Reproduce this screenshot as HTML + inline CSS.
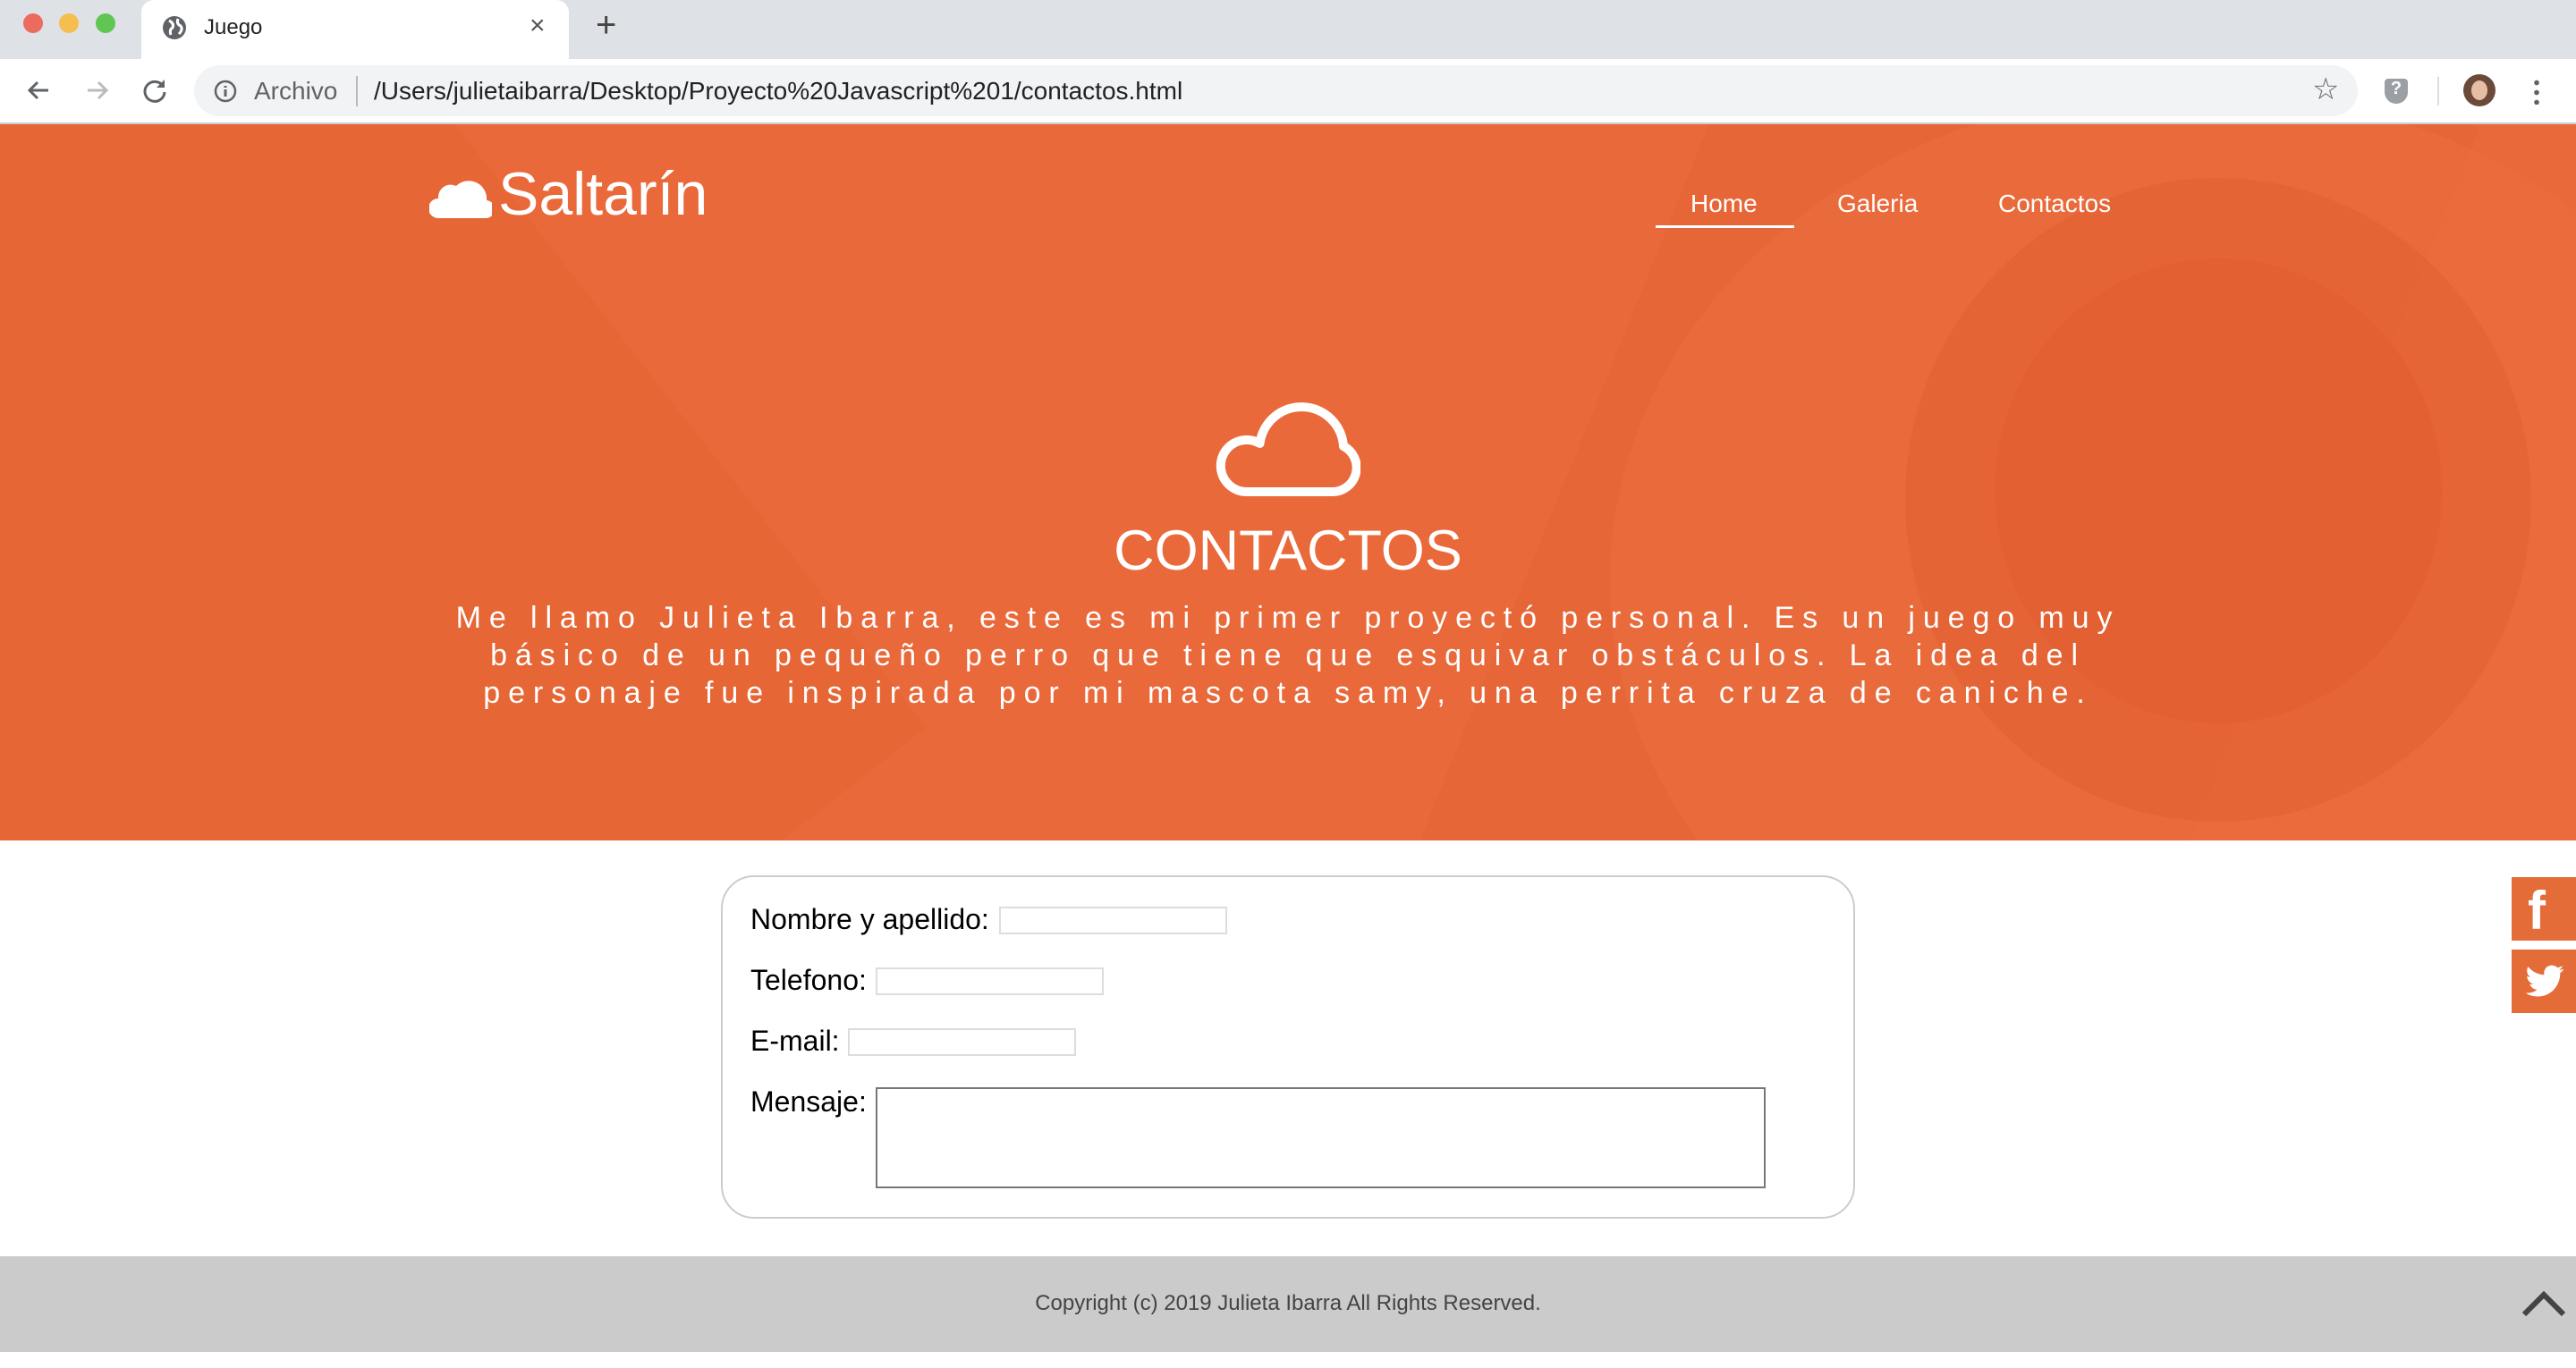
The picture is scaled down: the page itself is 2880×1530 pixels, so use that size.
<!DOCTYPE html>
<html><head><meta charset="utf-8"><style>
*{margin:0;padding:0;box-sizing:border-box}
body{width:2880px;height:1530px;overflow:hidden;background:#fff;font-family:"Liberation Sans",Arial,sans-serif;position:relative}
.abs{position:absolute}
.tabbar{left:0;top:0;width:2880px;height:66px;background:#dee1e6}
.dot{width:22px;height:22px;border-radius:50%;top:15px}
.tab{left:158px;top:0;width:478px;height:68px;background:#fff;border-radius:14px 14px 0 0}
.toolbar{left:0;top:66px;width:2880px;height:73px;background:#fff;border-bottom:2px solid #ccc}
.omni{left:217px;top:73px;width:2419px;height:57px;background:#f1f3f4;border-radius:29px}
.hero{left:0;top:139px;width:2880px;height:801px;background:#e9693a;overflow:hidden}
.nav{color:#fff;font-size:28px;top:212px}
.p{left:0;width:2880px;top:670px;text-align:center;color:#fff;font-size:34px;letter-spacing:8.9px;line-height:42px}
.form{left:806px;top:979px;width:1268px;height:384px;border:2px solid #ccc;border-radius:37px}
.lbl{font-size:32px;color:#000;left:839px}
.inp{height:31px;border:2px solid #ddd;background:#fff;width:255px}
.footer{left:0;top:1405px;width:2880px;height:107px;background:#cbcbcb}
.soc{left:2808px;width:72px;height:71px;background:#e46c39}
</style></head><body>
<div class="abs tabbar"></div>
<div class="abs dot" style="left:26px;background:#ed6a5e"></div>
<div class="abs dot" style="left:66px;background:#f5bf4f"></div>
<div class="abs dot" style="left:107px;background:#61c554"></div>
<div class="abs tab"></div>
<svg class="abs" style="left:181px;top:17px" width="28" height="28" viewBox="0 0 28 28"><circle cx="14" cy="14" r="13" fill="#5f6368"/><path d="M8 6 Q14 9 12 14 Q8 16 10 22 M18 4 Q16 10 21 12 Q24 16 19 21" stroke="#fff" stroke-width="3" fill="none"/></svg>
<div class="abs" style="left:228px;top:17px;font-size:24px;color:#222">Juego</div>
<div class="abs" style="left:592px;top:12px;font-size:30px;color:#555">×</div>
<div class="abs" style="left:666px;top:6px;font-size:40px;color:#444">+</div>
<div class="abs toolbar"></div>
<svg class="abs" style="left:28px;top:86px" width="30" height="30" viewBox="0 0 30 30"><path d="M26 15H5M14 6l-9 9 9 9" stroke="#5f6368" stroke-width="3" fill="none"/></svg>
<svg class="abs" style="left:94px;top:86px" width="30" height="30" viewBox="0 0 30 30"><path d="M4 15h21M16 6l9 9-9 9" stroke="#bbb" stroke-width="3" fill="none"/></svg>
<svg class="abs" style="left:158px;top:86px" width="30" height="30" viewBox="0 0 30 30"><path d="M24 10A11 11 0 1 0 26 17" stroke="#5f6368" stroke-width="3" fill="none"/><path d="M26 3v9h-9z" fill="#5f6368"/></svg>
<div class="abs omni"></div>
<svg class="abs" style="left:238px;top:88px" width="28" height="28" viewBox="0 0 28 28"><circle cx="14" cy="14" r="11" stroke="#5f6368" stroke-width="2.5" fill="none"/><path d="M14 12v8M14 8v2" stroke="#5f6368" stroke-width="3"/></svg>
<div class="abs" style="left:284px;top:86px;font-size:28px;color:#5f6368">Archivo</div>
<div class="abs" style="left:398px;top:85px;width:2px;height:34px;background:#bbb"></div>
<div class="abs" style="left:418px;top:86px;font-size:28px;color:#222">/Users/julietaibarra/Desktop/Proyecto%20Javascript%201/contactos.html</div>
<div class="abs" style="left:2585px;top:80px;font-size:34px;color:#5f6368">☆</div>
<div class="abs" style="left:2666px;top:88px;width:26px;height:28px;background:#9aa0a6;border-radius:4px 4px 13px 13px;color:#fff;font-size:20px;text-align:center;font-weight:bold">?</div>
<div class="abs" style="left:2725px;top:86px;width:2px;height:32px;background:#ddd"></div>
<div class="abs" style="left:2754px;top:83px;width:36px;height:36px;border-radius:50%;background:#6b4a3a"></div>
<div class="abs" style="left:2763px;top:90px;width:18px;height:22px;border-radius:50%;background:#e4bfa5"></div>
<div class="abs" style="left:2833px;top:87px;width:6px;height:30px;background:radial-gradient(circle,#5f6368 2.6px,transparent 3px) 0 0/6px 11px"></div>

<div class="abs hero">
<div class="abs" style="left:-200px;top:-300px;width:900px;height:1400px;background:#e06030;opacity:.3;transform:rotate(-38deg)"></div>
<div class="abs" style="left:1720px;top:-200px;width:800px;height:1500px;background:#e2612f;opacity:.25;transform:rotate(22deg)"></div>
<div class="abs" style="left:1800px;top:-40px;width:1300px;height:1100px;border-radius:50%;background:#ee7346;opacity:.35"></div>
<div class="abs" style="left:2130px;top:60px;width:700px;height:720px;border-radius:50%;background:#df5d2f;opacity:.4"></div>
<div class="abs" style="left:2230px;top:150px;width:500px;height:520px;border-radius:50%;background:#dc5a2c;opacity:.35"></div>
</div>
<svg class="abs" style="left:480px;top:190px" width="70" height="54" viewBox="0 0 70 54"><path d="M10 54H62A10 10 0 0 0 64 34A20 20 0 0 0 30 18A14 14 0 0 0 10 32A11 11 0 0 0 10 54Z" fill="#fff"/></svg>
<div class="abs" style="left:557px;top:178px;font-size:68px;color:#fff">Saltarín</div>
<div class="abs nav" style="left:1890px">Home</div>
<div class="abs" style="left:1851px;top:252px;width:155px;height:3px;background:#fff"></div>
<div class="abs nav" style="left:2054px">Galeria</div>
<div class="abs nav" style="left:2234px">Contactos</div>
<svg class="abs" style="left:1359px;top:437px" width="162" height="118" viewBox="0 0 162 118"><path d="M35 113H130A27 27 0 0 0 143 62A47 47 0 0 0 49.5 59A29 29 0 1 0 35 113Z" fill="none" stroke="#fff" stroke-width="10" stroke-linejoin="round"/></svg>
<div class="abs" style="left:0;width:2880px;top:580px;text-align:center;font-size:63px;color:#fff">CONTACTOS</div>
<div class="abs p">Me llamo Julieta Ibarra, este es mi primer proyectó personal. Es un juego muy<br>básico de un pequeño perro que tiene que esquivar obstáculos. La idea del<br>personaje fue inspirada por mi mascota samy, una perrita cruza de caniche.</div>

<div class="abs form"></div>
<div class="abs lbl" style="top:1010px">Nombre y apellido:</div>
<div class="abs inp" style="left:1117px;top:1014px"></div>
<div class="abs lbl" style="top:1078px">Telefono:</div>
<div class="abs inp" style="left:979px;top:1082px"></div>
<div class="abs lbl" style="top:1146px">E-mail:</div>
<div class="abs inp" style="left:948px;top:1150px"></div>
<div class="abs lbl" style="top:1214px">Mensaje:</div>
<div class="abs" style="left:979px;top:1216px;width:995px;height:113px;border:2px solid #777"></div>

<div class="abs soc" style="top:981px"></div>
<div class="abs" style="left:2826px;top:984px;font-size:60px;font-weight:bold;color:#fff">f</div>
<div class="abs soc" style="top:1062px"></div>
<svg class="abs" style="left:2822px;top:1078px" width="46" height="40" viewBox="0 0 24 20"><path d="M23 2.5c-.8.4-1.7.6-2.6.7.9-.6 1.6-1.4 2-2.5-.9.5-1.900.9-2.900 1.100A4.600 4.600 0 0 0 11.700 6C8 5.800 4.600 4 2.300 1.200c-1.200 2.100-.6 4.800 1.400 6.100-.7 0-1.400-.2-2-.6 0 2.200 1.600 4.100 3.700 4.600-.7.2-1.400.2-2.100.1.600 1.900 2.300 3.200 4.300 3.200A9.200 9.200 0 0 1 .8 16.500 13 13 0 0 0 7.900 18.600c8.500 0 13.300-7.200 13.100-13.700.9-.6 1.700-1.400 2-2.400z" fill="#fff"/></svg>

<div class="abs footer"></div>
<div class="abs" style="left:0;width:2880px;top:1444px;text-align:center;font-size:24px;color:#444">Copyright (c) 2019 Julieta Ibarra All Rights Reserved.</div>
<svg class="abs" style="left:2818px;top:1440px" width="52" height="34" viewBox="0 0 52 34"><path d="M4 30L26 8L48 30" stroke="#444" stroke-width="6" fill="none"/></svg>
</body></html>
